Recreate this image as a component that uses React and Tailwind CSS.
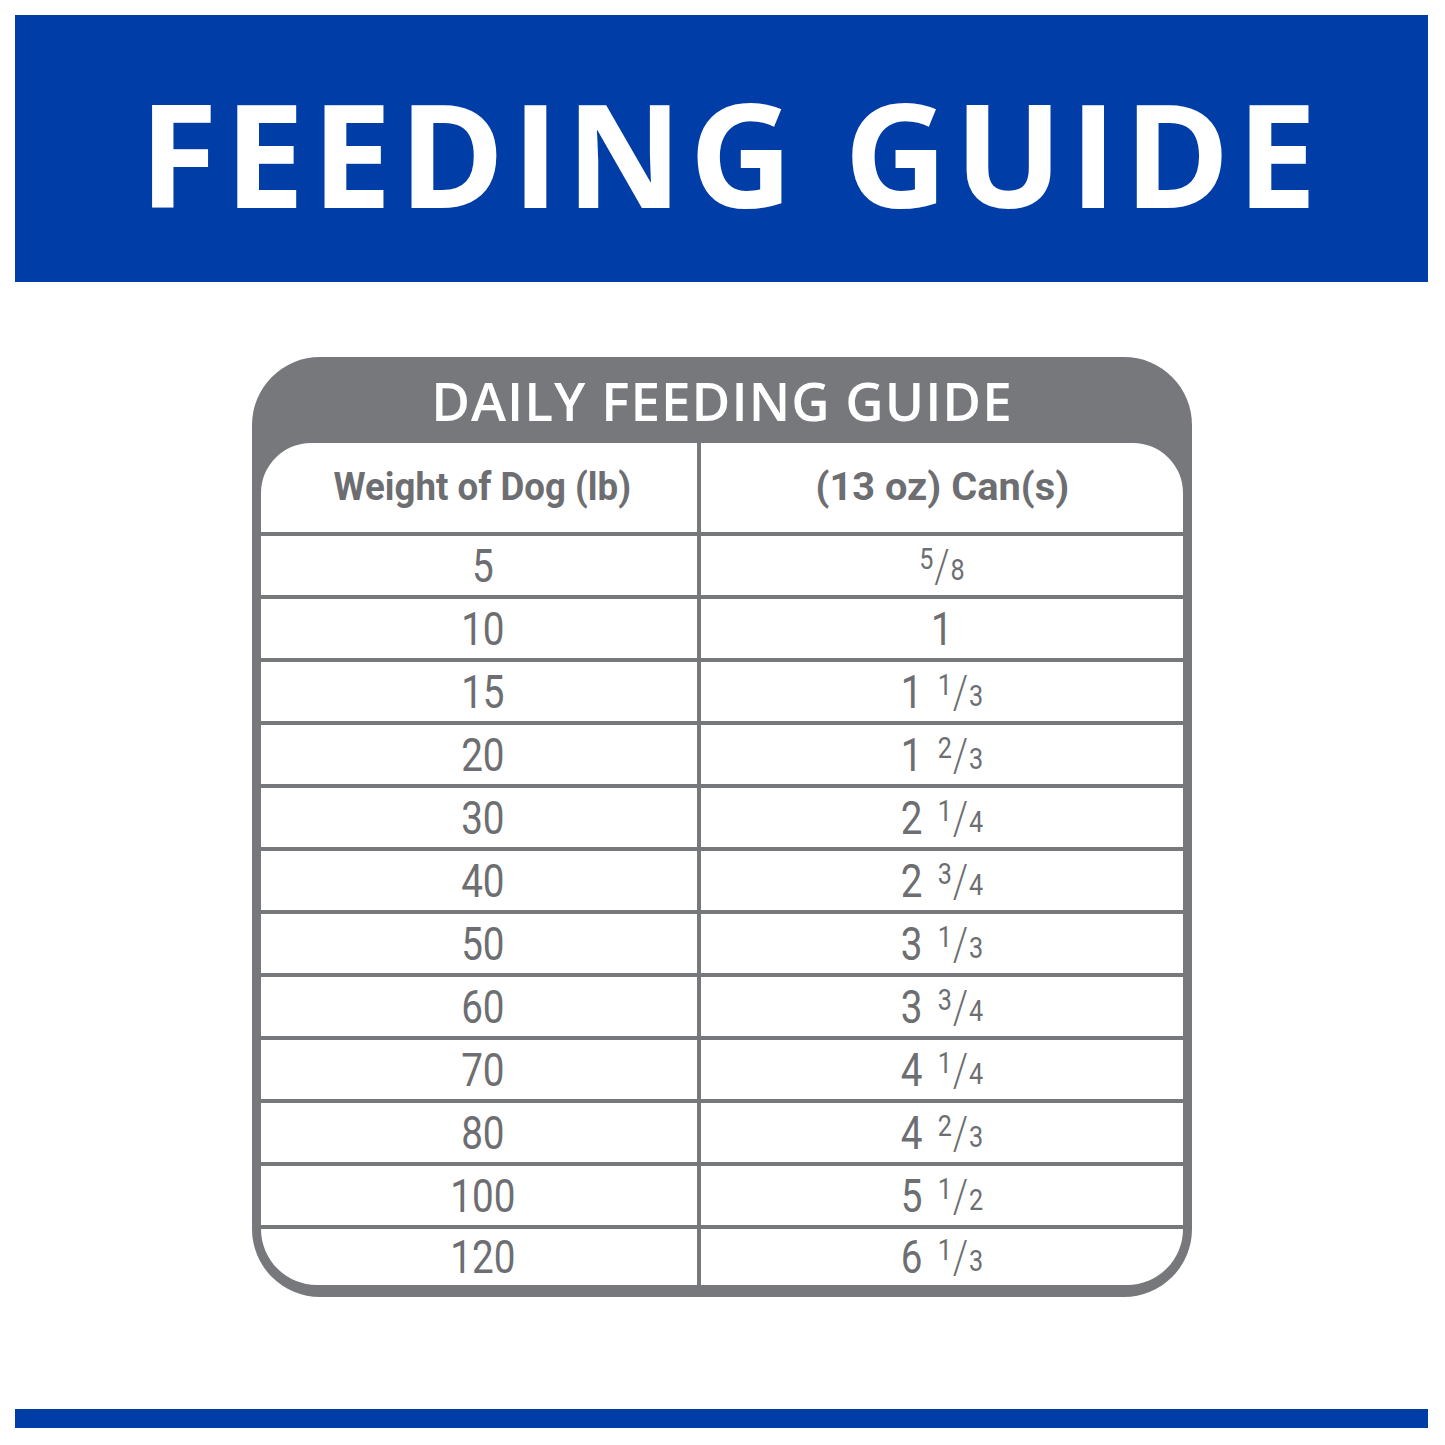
const rows = [
  ['5', null, '5', '8'],
  ['10', '1', null, null],
  ['15', '1', '1', '3'],
  ['20', '1', '2', '3'],
  ['30', '2', '1', '4'],
  ['40', '2', '3', '4'],
  ['50', '3', '1', '3'],
  ['60', '3', '3', '4'],
  ['70', '4', '1', '4'],
  ['80', '4', '2', '3'],
  ['100', '5', '1', '2'],
  ['120', '6', '1', '3'],
];

const cond = { fontFamily: 'Roboto, "Liberation Sans", Arial, sans-serif' };

const Amount = ({ whole, num, den }) => (
  <span className="inline-flex items-start leading-none scale-x-[0.84]">
    {whole && <span className="text-[46px]">{whole}</span>}
    {whole && num && <span className="w-[18px]" />}
    {num && (
      <>
        <span className="text-[30px] mt-[1px]">{num}</span>
        <span className="text-[46px] font-light px-[1px]">/</span>
        <span className="text-[30px] mt-[12px]">{den}</span>
      </>
    )}
  </span>
);

const App = () => {
  return (
    <div className="w-[1445px] h-[1445px] bg-white pt-[15px] pl-[15px] pr-[17px] flex flex-col">
      <header className="h-[267px] bg-[#003da6] flex items-center justify-center">
        <h1
          className="text-white text-[143px] font-bold tracking-[7px] leading-none pt-[8px] pl-[20px]"
          style={{ fontFamily: '"Open Sans", "Liberation Sans", sans-serif' }}
        >
          FEEDING GUIDE
        </h1>
      </header>

      <section className="mt-[75px] ml-[237px] w-[940px] bg-[#77787b] rounded-[68px] px-[9px] pb-[12px]">
        <h2
          className="h-[86px] flex items-center justify-center text-white text-[53px] font-semibold tracking-[1px] pt-[2px]"
          style={{ fontFamily: '"Open Sans", "Liberation Sans", sans-serif' }}
        >
          DAILY FEEDING GUIDE
        </h2>
        <div className="bg-white rounded-t-[50px] rounded-b-[56px] overflow-hidden text-[#6d6e71]" style={cond}>
          <div className="flex h-[89px] font-bold text-[39px]">
            <div className="w-[440px] border-r-4 border-[#77787b] flex items-center justify-center pl-[6px]">
              <span className="inline-block scale-x-[0.94]">Weight of Dog (lb)</span>
            </div>
            <div className="flex-1 flex items-center justify-center">
              <span className="inline-block scale-x-[1.02]">(13 oz) Can(s)</span>
            </div>
          </div>
          {rows.map(([w, whole, num, den], i) => (
            <div
              key={w}
              className={`flex border-t-4 border-[#77787b] ${i === rows.length - 1 ? 'h-[60px]' : 'h-[63px]'}`}
            >
              <div className="w-[440px] border-r-4 border-[#77787b] flex items-center justify-center pl-[8px] text-[46px] leading-none">
                <span className="inline-block scale-x-[0.84]">{w}</span>
              </div>
              <div className="flex-1 flex items-center justify-center">
                <Amount whole={whole} num={num} den={den} />
              </div>
            </div>
          ))}
        </div>
      </section>

      <div className="mt-[112px] h-[19px] bg-[#003da6]" />
    </div>
  );
};

export default App;
